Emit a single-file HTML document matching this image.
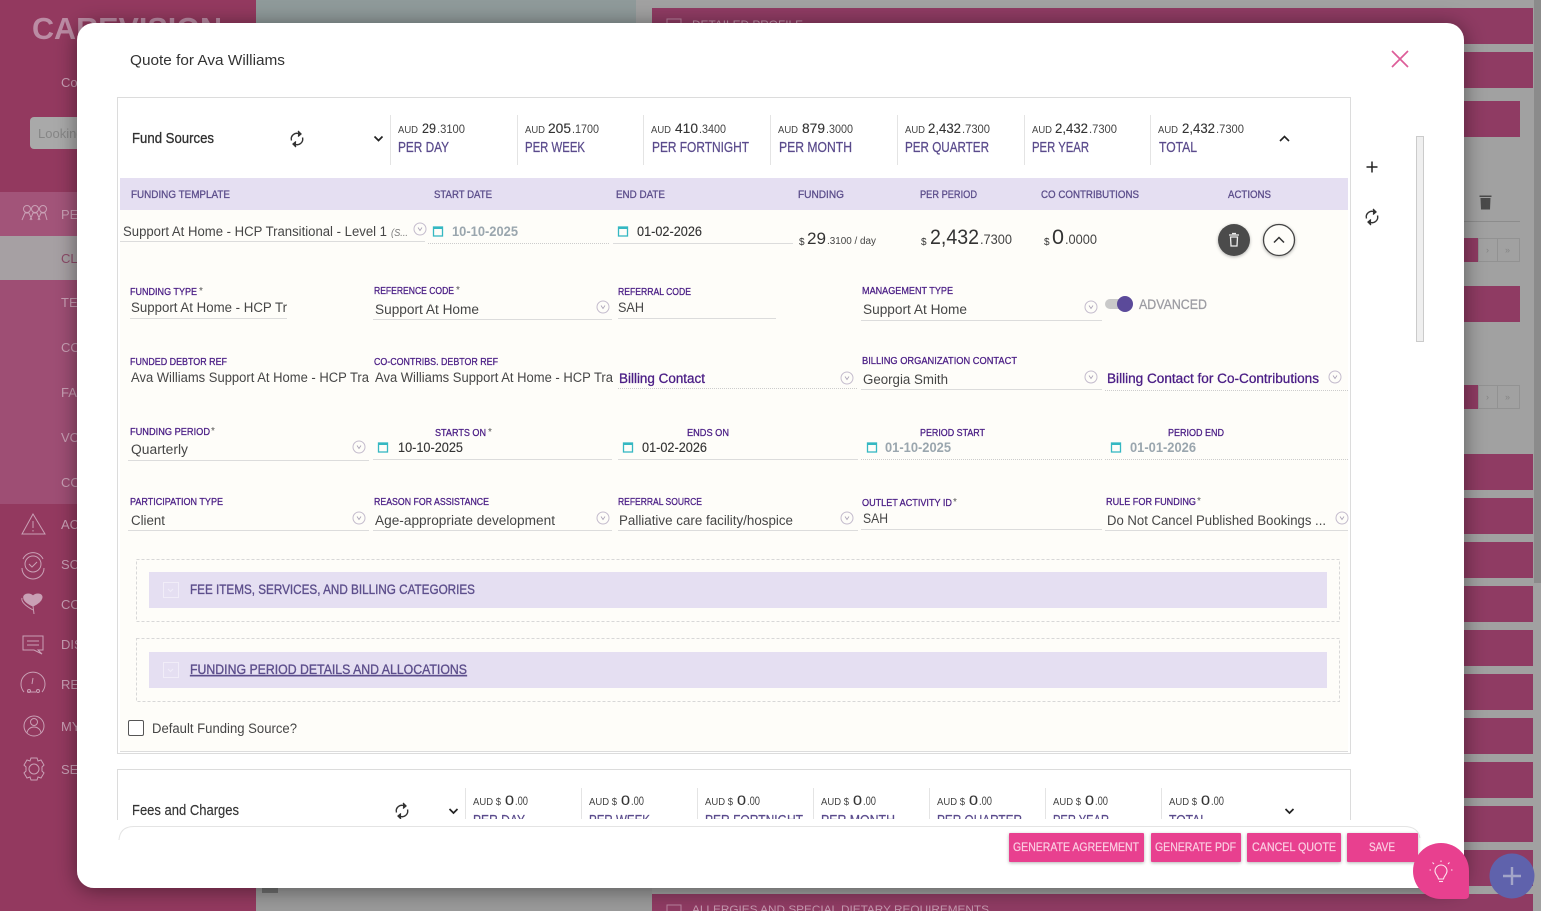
<!DOCTYPE html>
<html><head><meta charset="utf-8"><title>Quote for Ava Williams</title>
<style>
html,body{margin:0;padding:0;background:#a0a0a0;overflow:hidden}
svg{display:block}
text{font-family:"Liberation Sans",sans-serif;white-space:pre}
.v{font-size:13.500px;fill:#464646}
.l{font-size:10.500px;fill:#4a1d85;stroke:#4a1d85;stroke-width:.28}
.h{font-size:11px;fill:#5d4f8c;stroke:#5d4f8c;stroke-width:.32}
.a{font-size:10px;fill:#444}
.n{font-size:13.500px;fill:#333;stroke:#333;stroke-width:.12}
.d{font-size:11.500px;fill:#444}
.p{font-size:14.500px;fill:#5a4b8c;stroke:#5a4b8c;stroke-width:.25}
.g{font-size:13.500px;fill:#9aa6ae;font-weight:bold}
.b{font-size:13.500px;fill:#4a1d85;stroke:#4a1d85;stroke-width:.3}
.s{font-size:13.500px;fill:#5d4f8c;stroke:#5d4f8c;stroke-width:.35}
.t{font-size:12px;fill:#fbcfe3;stroke:#fbcfe3;stroke-width:.2;text-anchor:start}
.m{font-size:13px;fill:#c9a0b5}
.i{fill:none;stroke:#c9a0b5;stroke-width:1}
</style></head><body>
<svg xmlns="http://www.w3.org/2000/svg" width="1541" height="911" viewBox="0 0 1541 911">
<defs>
<filter id="sh" x="-10%" y="-10%" width="120%" height="120%"><feDropShadow dx="0" dy="2" stdDeviation="11" flood-color="#000" flood-opacity=".45"/></filter>
<filter id="bs" x="-20%" y="-40%" width="140%" height="180%"><feDropShadow dx="0" dy="1" stdDeviation="1.5" flood-color="#000" flood-opacity=".3"/></filter>
<clipPath id="c2"><rect x="118" y="770" width="1232" height="49"/></clipPath>
<g id="dd"><circle r="6" fill="none" stroke="#c4bccd" stroke-width="1"/><path d="M-2 -1.500L0 1.500L2 -1.500" fill="none" stroke="#a8a0b4" stroke-width=".8"/></g>
<g id="cal"><rect x="-4.500" y="-4" width="9" height="9" fill="none" stroke="#35b8c2" stroke-width="1.300"/><path d="M-4.500 -4H4.500V-2H-4.500Z" fill="#35b8c2"/></g>
<g id="rf" fill="none" stroke="#333" stroke-width="1.400"><path d="M-5.500 1.500A5.600 5.600 0 0 1 2.500 -5"/><path d="M5.500 -1.500A5.600 5.600 0 0 1 -2.500 5"/><path d="M1 -8L4 -5L1 -2.500" stroke-width="1.300" fill="#333"/><path d="M-1 8L-4 5L-1 2.500" stroke-width="1.300" fill="#333"/></g>
<path id="cv" d="M-4 -2L0 2L4 -2" fill="none" stroke="#222" stroke-width="1.700"/>
</defs>

<!-- background -->
<rect width="1541" height="911" fill="#a1a1a1"/>
<rect x="256" y="0" width="380" height="30" fill="#8f9a9a"/>
<rect x="256" y="880" width="396" height="31" fill="#9a9a9a"/>
<rect x="1534" y="0" width="7" height="583" fill="#8b8b8b"/>
<rect x="0" y="0" width="256" height="911" fill="#93395f"/>
<rect x="0" y="192" width="256" height="44" fill="#a25479"/>
<rect x="0" y="236" width="256" height="44" fill="#a6a0a3"/>
<rect x="0" y="280" width="256" height="224" fill="#9e4e74"/>
<text x="32" y="39" font-size="31" font-weight="bold" fill="#bb8ca4" textLength="190" lengthAdjust="spacingAndGlyphs">CAREVISION</text>
<text x="61" y="87" class="m" font-size="15">Co</text>
<rect x="30" y="117" width="90" height="32" rx="4" fill="#a9a9a9"/>
<text x="38" y="138" font-size="13" fill="#868686">Looking</text>
<g>
<text x="61" y="219" class="m">PE</text><text x="61" y="263" font-size="13" fill="#8c4a68">CL</text><text x="61" y="307" class="m">TE</text><text x="61" y="352" class="m">CO</text><text x="61" y="397" class="m">FA</text><text x="61" y="442" class="m">VO</text><text x="61" y="487" class="m">CO</text><text x="61" y="529" class="m">AC</text><text x="61" y="569" class="m">SC</text><text x="61" y="609" class="m">CO</text><text x="61" y="649" class="m">DIS</text><text x="61" y="689" class="m">RE</text><text x="61" y="731" class="m">MY</text><text x="61" y="774" class="m">SE</text>
<g class="i">
<circle cx="27" cy="209" r="3.500"/><circle cx="35" cy="209" r="3.500"/><circle cx="43" cy="209" r="3.500"/><path d="M22 220l3-7h4l3 7M30 220l3-7h4l3 7M38 220l3-7h4l2 7"/>
<path d="M33 514L45 534H22Z"/><path d="M33 521v7M33 530v1.500"/>
<path d="M23 559A11 11 0 0 1 43 559M44 568A11 11 0 0 1 22 568"/><circle cx="33" cy="564" r="8"/><path d="M29 564l3 3 5-5"/>
<path d="M33 610c-9-5-12-9-11-12" /><path d="M33 606c-12-5-11-12-5-12 2 0 4 1 5 2 1-1 3-2 5-2 6 0 6 7-5 12z" fill="#c9a0b5"/><path d="M33 606l1 8"/>
<path d="M23 636H43V650H38L42 654 34 650H23Z"/><path d="M27 641H39M27 645H39"/>
<path d="M24 692A12 12 0 1 1 42 692"/><path d="M33 678l-1 6"/><circle cx="29" cy="691" r="1.500"/><circle cx="38" cy="691" r="1.500"/><path d="M27 692H36"/>
<circle cx="34" cy="726" r="10"/><circle cx="34" cy="722" r="3.500"/><path d="M27 733c1-8 13-8 14 0"/>
<circle cx="34" cy="769" r="5"/><path d="M31 758h6l1 3 3-1 3 5-2 2v4l2 2-3 5-3-1-1 3h-6l-1-3-3 1-3-5 2-2v-4l-2-2 3-5 3 1z"/>
</g></g>

<!-- right pink bars -->
<g fill="#8f3b63">
<rect x="652" y="8" width="881" height="36"/><rect x="652" y="52" width="881" height="36"/>
<rect x="652" y="101" width="868" height="36"/><rect x="652" y="286" width="868" height="36"/>
<rect x="652" y="454" width="881" height="36"/><rect x="652" y="498" width="881" height="36"/><rect x="652" y="542" width="881" height="36"/><rect x="652" y="586" width="881" height="36"/><rect x="652" y="630" width="881" height="36"/><rect x="652" y="674" width="881" height="36"/><rect x="652" y="718" width="881" height="36"/><rect x="652" y="762" width="881" height="36"/><rect x="652" y="806" width="881" height="36"/><rect x="652" y="850" width="881" height="36"/>
<rect x="652" y="894" width="881" height="17"/>
<rect x="1464" y="238" width="14" height="24"/><rect x="1464" y="385" width="14" height="24"/>
</g>
<text x="692" y="28" font-size="11" fill="#c69ab0" textLength="111" lengthAdjust="spacingAndGlyphs">DETAILED PROFILE</text>
<rect x="667" y="19" width="14" height="14" fill="none" stroke="#b9849f"/>
<rect x="667" y="905" width="14" height="14" fill="none" stroke="#b9849f"/>
<text x="692" y="913" font-size="11" fill="#c69ab0" textLength="297" lengthAdjust="spacingAndGlyphs">ALLERGIES AND SPECIAL DIETARY REQUIREMENTS</text>
<path d="M1480.500 198H1490.500L1490 209.500H1481ZM1479.500 195.500H1491.500V197H1479.500Z" fill="#4a4a4a"/>
<rect x="1464" y="221" width="56" height="1" fill="#8c8c8c"/>
<g fill="none" stroke="#929292"><rect x="1478.500" y="238.500" width="19" height="23"/><rect x="1497.500" y="238.500" width="22" height="23"/><rect x="1478.500" y="385.500" width="19" height="23"/><rect x="1497.500" y="385.500" width="22" height="23"/></g>
<g font-size="9" fill="#858585"><text x="1486" y="253">›</text><text x="1505" y="253">»</text><text x="1486" y="400">›</text><text x="1505" y="400">»</text></g>
<rect x="262" y="886" width="16" height="7" fill="#6f6f6f"/>

<!-- modal -->
<rect x="77" y="23" width="1387" height="865" rx="17" fill="#fff" filter="url(#sh)"/>
<text x="130" y="65" font-size="14.500" fill="#333" textLength="155" lengthAdjust="spacingAndGlyphs">Quote for Ava Williams</text>
<path d="M1392 51L1408 67M1408 51L1392 67" stroke="#dd5d99" stroke-width="1.700" fill="none"/>

<!-- fund panel -->
<rect x="117.500" y="97.500" width="1233" height="656" fill="#fff" stroke="#dcdcdc"/>
<rect x="120" y="178" width="1228" height="32" fill="#e5dff2"/>
<rect x="120" y="210" width="1228" height="541" fill="#fefdf9"/>
<path d="M120 751.500H1348" stroke="#dcdcdc"/>

<text x="132" y="143" font-size="14.500" fill="#2f2f2f" stroke="#2f2f2f" stroke-width=".3" textLength="82" lengthAdjust="spacingAndGlyphs">Fund Sources</text>
<use href="#rf" x="297" y="139"/><use href="#cv" x="378.500" y="138.500"/>
<path d="M1280 141L1284.500 136.500L1289 141" fill="none" stroke="#222" stroke-width="1.600"/>
<g stroke="#e4e4e4"><path d="M390.500 115V165M517.500 115V165M643.500 115V165M770.500 115V165M897.500 115V165M1024.500 115V165M1150.500 115V165"/></g>

<text class="a" x="398" y="133" textLength="20" lengthAdjust="spacingAndGlyphs">AUD</text><text class="n" x="422" y="133" textLength="14" lengthAdjust="spacingAndGlyphs">29</text><text class="d" x="437" y="133" textLength="28" lengthAdjust="spacingAndGlyphs">.3100</text><text class="p" x="398" y="152" textLength="51" lengthAdjust="spacingAndGlyphs">PER DAY</text>
<text class="a" x="525" y="133" textLength="20" lengthAdjust="spacingAndGlyphs">AUD</text><text class="n" x="548" y="133" textLength="23" lengthAdjust="spacingAndGlyphs">205</text><text class="d" x="572" y="133" textLength="27" lengthAdjust="spacingAndGlyphs">.1700</text><text class="p" x="525" y="152" textLength="60" lengthAdjust="spacingAndGlyphs">PER WEEK</text>
<text class="a" x="651" y="133" textLength="20" lengthAdjust="spacingAndGlyphs">AUD</text><text class="n" x="675" y="133" textLength="23" lengthAdjust="spacingAndGlyphs">410</text><text class="d" x="699" y="133" textLength="27" lengthAdjust="spacingAndGlyphs">.3400</text><text class="p" x="652" y="152" textLength="97" lengthAdjust="spacingAndGlyphs">PER FORTNIGHT</text>
<text class="a" x="778" y="133" textLength="20" lengthAdjust="spacingAndGlyphs">AUD</text><text class="n" x="802" y="133" textLength="23" lengthAdjust="spacingAndGlyphs">879</text><text class="d" x="826" y="133" textLength="27" lengthAdjust="spacingAndGlyphs">.3000</text><text class="p" x="779" y="152" textLength="73" lengthAdjust="spacingAndGlyphs">PER MONTH</text>
<text class="a" x="905" y="133" textLength="20" lengthAdjust="spacingAndGlyphs">AUD</text><text class="n" x="928" y="133" textLength="33" lengthAdjust="spacingAndGlyphs">2,432</text><text class="d" x="962" y="133" textLength="28" lengthAdjust="spacingAndGlyphs">.7300</text><text class="p" x="905" y="152" textLength="84" lengthAdjust="spacingAndGlyphs">PER QUARTER</text>
<text class="a" x="1032" y="133" textLength="20" lengthAdjust="spacingAndGlyphs">AUD</text><text class="n" x="1055" y="133" textLength="33" lengthAdjust="spacingAndGlyphs">2,432</text><text class="d" x="1089" y="133" textLength="28" lengthAdjust="spacingAndGlyphs">.7300</text><text class="p" x="1032" y="152" textLength="57" lengthAdjust="spacingAndGlyphs">PER YEAR</text>
<text class="a" x="1158" y="133" textLength="20" lengthAdjust="spacingAndGlyphs">AUD</text><text class="n" x="1182" y="133" textLength="33" lengthAdjust="spacingAndGlyphs">2,432</text><text class="d" x="1216" y="133" textLength="28" lengthAdjust="spacingAndGlyphs">.7300</text><text class="p" x="1159" y="152" textLength="38" lengthAdjust="spacingAndGlyphs">TOTAL</text>

<text class="h" x="131" y="198" textLength="99" lengthAdjust="spacingAndGlyphs">FUNDING TEMPLATE</text>
<text class="h" x="434" y="198" textLength="58" lengthAdjust="spacingAndGlyphs">START DATE</text>
<text class="h" x="616" y="198" textLength="49" lengthAdjust="spacingAndGlyphs">END DATE</text>
<text class="h" x="798" y="198" textLength="46" lengthAdjust="spacingAndGlyphs">FUNDING</text>
<text class="h" x="920" y="198" textLength="57" lengthAdjust="spacingAndGlyphs">PER PERIOD</text>
<text class="h" x="1041" y="198" textLength="98" lengthAdjust="spacingAndGlyphs">CO CONTRIBUTIONS</text>
<text class="h" x="1228" y="198" textLength="43" lengthAdjust="spacingAndGlyphs">ACTIONS</text>

<!-- row -->
<text class="v" x="123" y="236" textLength="264" lengthAdjust="spacingAndGlyphs">Support At Home - HCP Transitional - Level 1</text>
<text x="391" y="236" font-size="10" font-style="italic" fill="#777" textLength="17" lengthAdjust="spacingAndGlyphs">(S...</text>
<use href="#dd" x="420" y="229"/>
<path d="M120 241.500H425" stroke="#dcdcdc"/>
<use href="#cal" x="438" y="231"/>
<text class="g" x="452" y="236" textLength="66" lengthAdjust="spacingAndGlyphs">10-10-2025</text>
<path d="M428 243.500H610" stroke="#ccc" stroke-dasharray="1 1"/>
<use href="#cal" x="623" y="231"/>
<text class="n" x="637" y="236" textLength="65" lengthAdjust="spacingAndGlyphs">01-02-2026</text>
<path d="M613 243.500H793" stroke="#dcdcdc"/>

<text x="799" y="245" font-size="10" fill="#333">$</text>
<text x="807" y="244" font-size="17" fill="#333" textLength="19" lengthAdjust="spacingAndGlyphs">29</text>
<text x="827" y="244" font-size="10" fill="#444" textLength="49" lengthAdjust="spacingAndGlyphs">.3100 / day</text>
<text x="921" y="245" font-size="10" fill="#333">$</text>
<text x="930" y="244" font-size="21" fill="#333" textLength="49" lengthAdjust="spacingAndGlyphs">2,432</text>
<text x="980" y="244" font-size="14" fill="#444" textLength="32" lengthAdjust="spacingAndGlyphs">.7300</text>
<text x="1044" y="245" font-size="10" fill="#333">$</text>
<text x="1052" y="244" font-size="21" fill="#333" textLength="12" lengthAdjust="spacingAndGlyphs">0</text>
<text x="1065" y="244" font-size="14" fill="#444" textLength="32" lengthAdjust="spacingAndGlyphs">.0000</text>

<circle cx="1234" cy="240" r="16" fill="#4b4b4b" filter="url(#bs)"/>
<path d="M1230.500 237H1237.500L1237 246H1231Z" fill="none" stroke="#eee" stroke-width="1.300"/><path d="M1229 235H1239M1232 233.500H1236" stroke="#eee" stroke-width="1.300"/>
<circle cx="1279" cy="240" r="15.500" fill="#fefdf9" stroke="#444" stroke-width="1.300" filter="url(#bs)"/>
<path d="M1274 242.500L1279 237.500L1284 242.500" fill="none" stroke="#333" stroke-width="1.500"/>

<path d="M1366.500 167H1377.500M1372 161.500V172.500" stroke="#222" stroke-width="1.500"/>
<use href="#rf" x="1372" y="217"/>
<rect x="1416.500" y="136.500" width="7" height="205" fill="#efefef" stroke="#cbcbcb"/>

<!-- row 1 -->
<text class="l" x="130" y="295" textLength="67" lengthAdjust="spacingAndGlyphs">FUNDING TYPE</text><text x="199" y="294" font-size="10" fill="#555">*</text>
<text class="l" x="374" y="294" textLength="80" lengthAdjust="spacingAndGlyphs">REFERENCE CODE</text><text x="456" y="293" font-size="10" fill="#555">*</text>
<text class="l" x="618" y="295" textLength="73" lengthAdjust="spacingAndGlyphs">REFERRAL CODE</text>
<text class="l" x="862" y="294" textLength="91" lengthAdjust="spacingAndGlyphs">MANAGEMENT TYPE</text>
<text class="v" x="131" y="312" textLength="156" lengthAdjust="spacingAndGlyphs">Support At Home - HCP Tr</text>
<path d="M130 318.500H287M618 318.500H776M373 319.500H612M861 320.500H1102" stroke="#dcdcdc"/>
<text class="v" x="375" y="314" textLength="104" lengthAdjust="spacingAndGlyphs">Support At Home</text><use href="#dd" x="603" y="307"/>
<text class="v" x="618" y="312" textLength="26" lengthAdjust="spacingAndGlyphs">SAH</text>
<text class="v" x="863" y="314" textLength="104" lengthAdjust="spacingAndGlyphs">Support At Home</text><use href="#dd" x="1091" y="307"/>
<rect x="1105" y="299" width="22" height="10" rx="5" fill="#c9c9c9"/><circle cx="1125" cy="304" r="8" fill="#5b4a9a"/>
<text x="1139" y="309" font-size="13.500" fill="#9d9da3" stroke="#9d9da3" stroke-width=".3" textLength="68" lengthAdjust="spacingAndGlyphs">ADVANCED</text>

<!-- row 2 -->
<text class="l" x="130" y="365" textLength="97" lengthAdjust="spacingAndGlyphs">FUNDED DEBTOR REF</text>
<text class="l" x="374" y="365" textLength="124" lengthAdjust="spacingAndGlyphs">CO-CONTRIBS. DEBTOR REF</text>
<text class="l" x="862" y="364" textLength="155" lengthAdjust="spacingAndGlyphs">BILLING ORGANIZATION CONTACT</text>
<text class="v" x="131" y="382" textLength="238" lengthAdjust="spacingAndGlyphs">Ava Williams Support At Home - HCP Tra</text>
<text class="v" x="375" y="382" textLength="238" lengthAdjust="spacingAndGlyphs">Ava Williams Support At Home - HCP Tra</text>
<text class="b" x="619" y="383" textLength="86" lengthAdjust="spacingAndGlyphs">Billing Contact</text><use href="#dd" x="847" y="378"/>
<text class="v" x="863" y="384" textLength="85" lengthAdjust="spacingAndGlyphs">Georgia Smith</text><use href="#dd" x="1091" y="377"/>
<text class="b" x="1107" y="383" textLength="212" lengthAdjust="spacingAndGlyphs">Billing Contact for Co-Contributions</text><use href="#dd" x="1335" y="377"/>
<path d="M618 388.500H858M1105 390.500H1348" stroke="#ccc" stroke-dasharray="1 1"/>
<path d="M861 389.500H1102" stroke="#dcdcdc"/>

<!-- row 3 -->
<text class="l" x="130" y="435" textLength="80" lengthAdjust="spacingAndGlyphs">FUNDING PERIOD</text><text x="211" y="434" font-size="10" fill="#555">*</text>
<text class="l" x="435" y="436" textLength="51" lengthAdjust="spacingAndGlyphs">STARTS ON</text><text x="488" y="435" font-size="10" fill="#555">*</text>
<text class="l" x="687" y="436" textLength="42" lengthAdjust="spacingAndGlyphs">ENDS ON</text>
<text class="l" x="920" y="436" textLength="65" lengthAdjust="spacingAndGlyphs">PERIOD START</text>
<text class="l" x="1168" y="436" textLength="56" lengthAdjust="spacingAndGlyphs">PERIOD END</text>
<text class="v" x="131" y="454" textLength="57" lengthAdjust="spacingAndGlyphs">Quarterly</text><use href="#dd" x="359" y="447"/>
<use href="#cal" x="383" y="447"/><text class="n" x="398" y="452" textLength="65" lengthAdjust="spacingAndGlyphs">10-10-2025</text>
<use href="#cal" x="628" y="447"/><text class="n" x="642" y="452" textLength="65" lengthAdjust="spacingAndGlyphs">01-02-2026</text>
<use href="#cal" x="872" y="447"/><text class="g" x="885" y="452" textLength="66" lengthAdjust="spacingAndGlyphs">01-10-2025</text>
<use href="#cal" x="1116" y="447"/><text class="g" x="1130" y="452" textLength="66" lengthAdjust="spacingAndGlyphs">01-01-2026</text>
<path d="M128 460.500H369M373 459.500H612M618 459.500H858" stroke="#dcdcdc"/>
<path d="M861 459.500H1102M1105 459.500H1348" stroke="#ccc" stroke-dasharray="1 1"/>

<!-- row 4 -->
<text class="l" x="130" y="505" textLength="93" lengthAdjust="spacingAndGlyphs">PARTICIPATION TYPE</text>
<text class="l" x="374" y="505" textLength="115" lengthAdjust="spacingAndGlyphs">REASON FOR ASSISTANCE</text>
<text class="l" x="618" y="505" textLength="84" lengthAdjust="spacingAndGlyphs">REFERRAL SOURCE</text>
<text class="l" x="862" y="506" textLength="90" lengthAdjust="spacingAndGlyphs">OUTLET ACTIVITY ID</text><text x="953" y="505" font-size="10" fill="#555">*</text>
<text class="l" x="1106" y="505" textLength="90" lengthAdjust="spacingAndGlyphs">RULE FOR FUNDING</text><text x="1197" y="504" font-size="10" fill="#555">*</text>
<text class="v" x="131" y="525" textLength="34" lengthAdjust="spacingAndGlyphs">Client</text><use href="#dd" x="359" y="518"/>
<text class="v" x="375" y="525" textLength="180" lengthAdjust="spacingAndGlyphs">Age-appropriate development</text><use href="#dd" x="603" y="518"/>
<text class="v" x="619" y="525" textLength="174" lengthAdjust="spacingAndGlyphs">Palliative care facility/hospice</text><use href="#dd" x="847" y="518"/>
<text class="v" x="863" y="523" textLength="25" lengthAdjust="spacingAndGlyphs">SAH</text>
<text class="v" x="1107" y="525" textLength="219" lengthAdjust="spacingAndGlyphs">Do Not Cancel Published Bookings ...</text><use href="#dd" x="1342" y="518"/>
<path d="M128 530.500H369M373 530.500H612M618 530.500H858M861 529.500H1102M1105 530.500H1348" stroke="#dcdcdc"/>

<!-- sections -->
<rect x="136.500" y="559.500" width="1203" height="62" fill="none" stroke="#d8d8d8" stroke-dasharray="3 2"/>
<rect x="149" y="572" width="1178" height="36" fill="#e5dff2"/>
<rect x="163.500" y="582.500" width="15" height="15" fill="none" stroke="#f1edf8"/><path d="M168 589l2.500 2.500 2.500-2.500" fill="none" stroke="#f1edf8"/>
<text class="s" x="190" y="594" textLength="285" lengthAdjust="spacingAndGlyphs">FEE ITEMS, SERVICES, AND BILLING CATEGORIES</text>
<rect x="136.500" y="638.500" width="1203" height="63" fill="none" stroke="#d8d8d8" stroke-dasharray="3 2"/>
<rect x="149" y="652" width="1178" height="36" fill="#e5dff2"/>
<rect x="163.500" y="662.500" width="15" height="15" fill="none" stroke="#f1edf8"/><path d="M168 669l2.500 2.500 2.500-2.500" fill="none" stroke="#f1edf8"/>
<text class="s" x="190" y="674" textLength="277" lengthAdjust="spacingAndGlyphs" text-decoration="underline">FUNDING PERIOD DETAILS AND ALLOCATIONS</text>
<rect x="128.500" y="720.500" width="15" height="15" rx="1.500" fill="#fff" stroke="#555"/>
<text class="v" x="152" y="733" textLength="145" lengthAdjust="spacingAndGlyphs">Default Funding Source?</text>

<!-- fees panel -->
<g clip-path="url(#c2)">
<text x="132" y="815" font-size="14.500" fill="#333" stroke="#333" stroke-width=".15" textLength="107" lengthAdjust="spacingAndGlyphs">Fees and Charges</text>
<use href="#rf" x="402" y="811"/><use href="#cv" x="453.500" y="811"/><use href="#cv" x="1289.500" y="811"/>
<path d="M465.500 788V820M581.500 788V820M697.500 788V820M813.500 788V820M929.500 788V820M1045.500 788V820M1161.500 788V820" stroke="#e4e4e4"/>
<g>
<text class="a" x="473" y="805" textLength="28" lengthAdjust="spacingAndGlyphs">AUD $</text><text class="n" x="505" y="805" textLength="9" lengthAdjust="spacingAndGlyphs">0</text><text class="d" x="515" y="805" textLength="13" lengthAdjust="spacingAndGlyphs">.00</text><text class="p" x="473" y="825" textLength="52" lengthAdjust="spacingAndGlyphs">PER DAY</text>
<text class="a" x="589" y="805" textLength="28" lengthAdjust="spacingAndGlyphs">AUD $</text><text class="n" x="621" y="805" textLength="9" lengthAdjust="spacingAndGlyphs">0</text><text class="d" x="631" y="805" textLength="13" lengthAdjust="spacingAndGlyphs">.00</text><text class="p" x="589" y="825" textLength="61" lengthAdjust="spacingAndGlyphs">PER WEEK</text>
<text class="a" x="705" y="805" textLength="28" lengthAdjust="spacingAndGlyphs">AUD $</text><text class="n" x="737" y="805" textLength="9" lengthAdjust="spacingAndGlyphs">0</text><text class="d" x="747" y="805" textLength="13" lengthAdjust="spacingAndGlyphs">.00</text><text class="p" x="705" y="825" textLength="98" lengthAdjust="spacingAndGlyphs">PER FORTNIGHT</text>
<text class="a" x="821" y="805" textLength="28" lengthAdjust="spacingAndGlyphs">AUD $</text><text class="n" x="853" y="805" textLength="9" lengthAdjust="spacingAndGlyphs">0</text><text class="d" x="863" y="805" textLength="13" lengthAdjust="spacingAndGlyphs">.00</text><text class="p" x="821" y="825" textLength="74" lengthAdjust="spacingAndGlyphs">PER MONTH</text>
<text class="a" x="937" y="805" textLength="28" lengthAdjust="spacingAndGlyphs">AUD $</text><text class="n" x="969" y="805" textLength="9" lengthAdjust="spacingAndGlyphs">0</text><text class="d" x="979" y="805" textLength="13" lengthAdjust="spacingAndGlyphs">.00</text><text class="p" x="937" y="825" textLength="85" lengthAdjust="spacingAndGlyphs">PER QUARTER</text>
<text class="a" x="1053" y="805" textLength="28" lengthAdjust="spacingAndGlyphs">AUD $</text><text class="n" x="1085" y="805" textLength="9" lengthAdjust="spacingAndGlyphs">0</text><text class="d" x="1095" y="805" textLength="13" lengthAdjust="spacingAndGlyphs">.00</text><text class="p" x="1053" y="825" textLength="56" lengthAdjust="spacingAndGlyphs">PER YEAR</text>
<text class="a" x="1169" y="805" textLength="28" lengthAdjust="spacingAndGlyphs">AUD $</text><text class="n" x="1201" y="805" textLength="9" lengthAdjust="spacingAndGlyphs">0</text><text class="d" x="1211" y="805" textLength="13" lengthAdjust="spacingAndGlyphs">.00</text><text class="p" x="1169" y="825" textLength="38" lengthAdjust="spacingAndGlyphs">TOTAL</text>
</g></g>
<path d="M117.500 820V769.500H1350.500V820" fill="none" stroke="#dcdcdc"/>
<rect x="112" y="820" width="1310" height="55" fill="#fff"/>
<path d="M119 840Q120 826.500 134 826.500H1404Q1418 826.500 1420 838" fill="none" stroke="#e4e4e4"/>

<!-- buttons -->
<g fill="#e8408f" filter="url(#bs)">
<rect x="1009" y="833" width="135" height="29" rx="1"/><rect x="1151" y="833" width="90" height="29" rx="1"/><rect x="1247" y="833" width="94" height="29" rx="1"/><rect x="1347" y="833" width="71" height="29" rx="1"/>
</g>
<text class="t" x="1013" y="851" textLength="126" lengthAdjust="spacingAndGlyphs">GENERATE AGREEMENT</text>
<text class="t" x="1155" y="851" textLength="81" lengthAdjust="spacingAndGlyphs">GENERATE PDF</text>
<text class="t" x="1252" y="851" textLength="84" lengthAdjust="spacingAndGlyphs">CANCEL QUOTE</text>
<text class="t" x="1369" y="851" textLength="26" lengthAdjust="spacingAndGlyphs">SAVE</text>

<!-- FABs -->
<path d="M1441 843A28 28 0 0 1 1469 871V895Q1469 899 1465 899H1441A28 28 0 0 1 1441 843Z" fill="#e8408f"/>
<g fill="none" stroke="#fde3ef" stroke-width="1.100"><path d="M1438.500 879C1438 875.500 1435 874.500 1435 871A6 6 0 0 1 1447 871C1447 874.500 1444 875.500 1443.500 879Z"/><path d="M1439 881.500H1443"/><path d="M1434 864l-1.500-1.500M1448 864l1.500-1.500M1441 862v-1.500M1431 870h-1.500M1451 870h1.500"/></g>
<circle cx="1512" cy="876" r="22.500" fill="#5f62ac"/>
<path d="M1503 876H1521M1512 867V885" stroke="#a3a5c8" stroke-width="2.400"/>
</svg>
</body></html>
